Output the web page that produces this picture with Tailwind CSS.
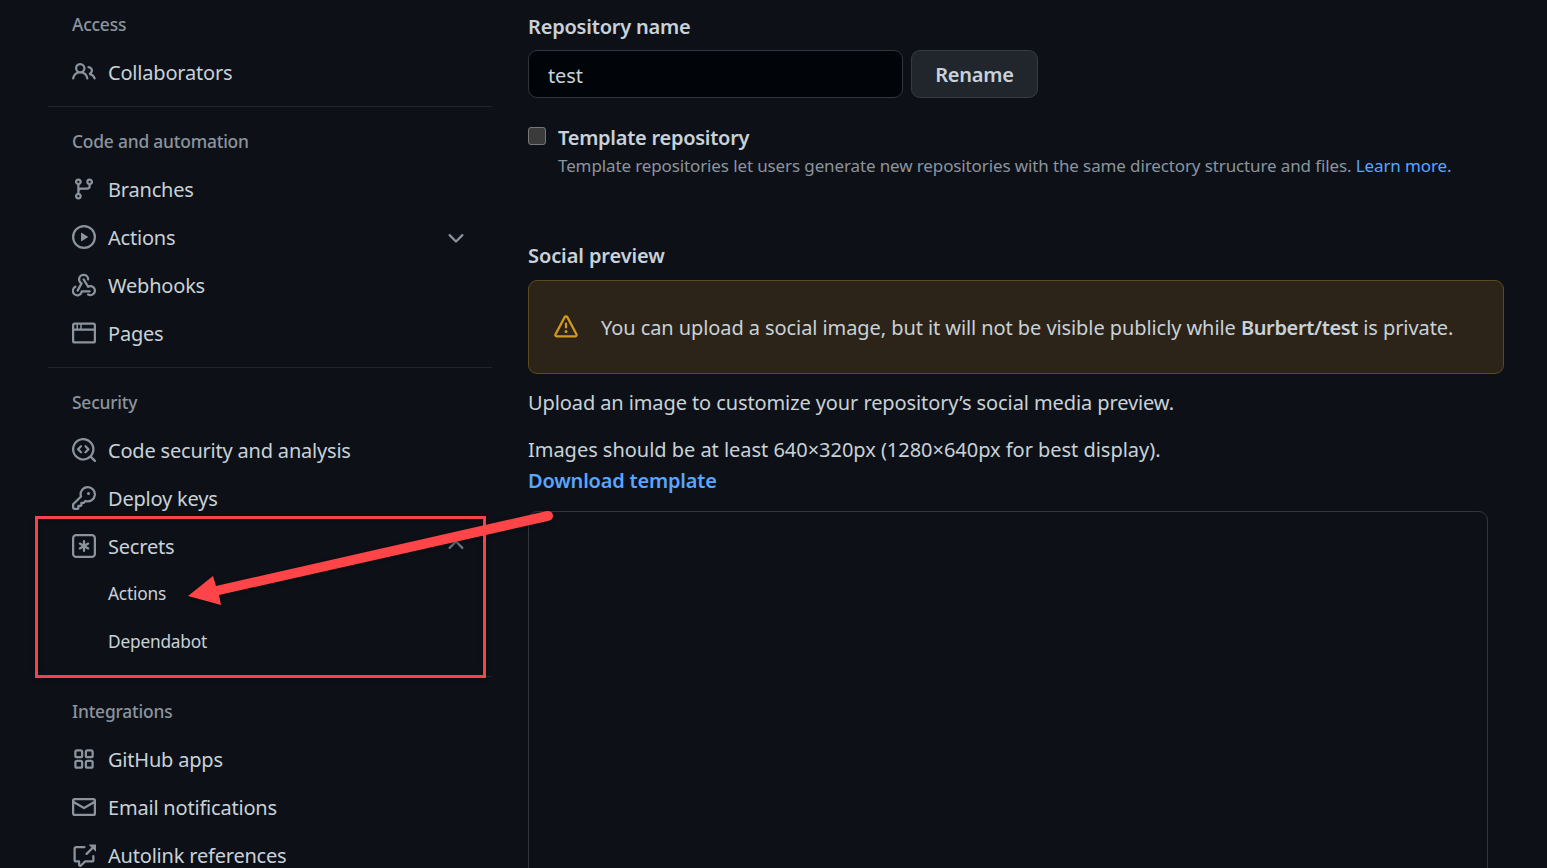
<!DOCTYPE html>
<html lang="en">
<head>
    <meta charset="UTF-8">
    <meta name="viewport" content="width=device-width, initial-scale=1.0">
    <title>Repository settings</title>
    <script src="https://cdn.jsdelivr.net/npm/@tailwindcss/browser@4"></script>
</head>
<body class="bg-[#0d1117] text-[#c9d1d9] font-['Noto_Sans',sans-serif] text-[20px] h-[868px] overflow-hidden relative">
    <div class="flex pl-[48px] gap-[36px] h-[868px] overflow-hidden">
        <!-- Sidebar -->
        <nav class="w-[444px] shrink-0 tracking-[-0.2px]">
            <div class="h-[49px] pl-6 flex items-center text-[17.4px] font-medium text-[#8b949e]">Access</div>
            <a class="h-12 -mt-px pl-6 flex items-center gap-3">
                <svg class="w-6 h-6 fill-[#8b949e]" viewBox="0 0 16 16"><path fill-rule="evenodd" d="M5.5 3.5a2 2 0 100 4 2 2 0 000-4zM2 5.5a3.5 3.5 0 115.898 2.549 5.507 5.507 0 013.034 4.084.75.75 0 11-1.482.235 3.999 3.999 0 00-7.9 0 .75.75 0 01-1.482-.236A5.507 5.507 0 013.102 8.05 3.49 3.49 0 012 5.5zM11 4a.75.75 0 100 1.5 1.5 1.5 0 01.666 2.844.75.75 0 00-.416.672v.352a.75.75 0 00.574.73c1.2.289 2.162 1.2 2.522 2.372a.75.75 0 101.434-.44 5.01 5.01 0 00-2.56-3.012A3 3 0 0011 4z"/></svg>
                <span class="mt-[2px]">Collaborators</span>
            </a>

            <div class="mt-[10px] border-t border-[#21262d] pt-[10px]">
                <div class="h-12 pl-6 flex items-center text-[17.4px] font-medium text-[#8b949e]">Code and automation</div>
                <a class="h-12 pl-6 flex items-center gap-3">
                    <svg class="w-6 h-6 fill-[#8b949e]" viewBox="0 0 16 16"><path fill-rule="evenodd" d="M11.75 2.5a.75.75 0 100 1.5.75.75 0 000-1.5zm-2.25.75a2.25 2.25 0 113 2.122V6A2.5 2.5 0 0110 8.5H6a1 1 0 00-1 1v1.128a2.251 2.251 0 11-1.5 0V5.372a2.25 2.25 0 111.5 0v1.836A2.492 2.492 0 016 7h4a1 1 0 001-1v-.628A2.25 2.25 0 019.5 3.25zM4.25 12a.75.75 0 100 1.5.75.75 0 000-1.5zM3.5 3.25a.75.75 0 111.5 0 .75.75 0 01-1.5 0z"/></svg>
                    <span class="mt-[2px]">Branches</span>
                </a>
                <a class="h-12 pl-6 pr-[24px] flex items-center gap-3">
                    <svg class="w-6 h-6 fill-[#8b949e]" viewBox="0 0 16 16"><path fill-rule="evenodd" d="M1.5 8a6.5 6.5 0 1113 0 6.5 6.5 0 01-13 0zM8 0a8 8 0 100 16A8 8 0 008 0zM6.379 5.227A.25.25 0 006 5.442v5.117a.25.25 0 00.379.214l4.264-2.559a.25.25 0 000-.428L6.379 5.227z"/></svg>
                    <span class="mt-[2px]">Actions</span>
                    <svg class="w-6 h-6 fill-[#8b949e] ml-auto" viewBox="0 0 16 16"><path d="M12.78 6.22a.75.75 0 010 1.06l-4.25 4.25a.75.75 0 01-1.06 0L3.22 7.28a.75.75 0 011.06-1.06L8 9.94l3.72-3.72a.75.75 0 011.06 0z"/></svg>
                </a>
                <a class="h-12 pl-6 flex items-center gap-3">
                    <svg class="w-6 h-6 fill-[#8b949e]" viewBox="0 0 16 16"><path d="M5.5 4.25a2.25 2.25 0 014.5 0 .75.75 0 001.5 0 3.75 3.75 0 10-6.14 2.889l-2.272 4.258a.75.75 0 001.324.706L7 7.25a.75.75 0 00-.309-1.015A2.25 2.25 0 015.5 4.25z"/><path d="M7.364 3.607a.75.75 0 011.03.257l2.608 4.349a3.75 3.75 0 11-.628 6.785.75.75 0 01.752-1.299 2.25 2.25 0 10-.033-3.88.75.75 0 01-1.03-.256L7.107 4.636a.75.75 0 01.257-1.03z"/><path d="M2.9 8.776A.75.75 0 012.625 9.8 2.25 2.25 0 105.75 12.25a.75.75 0 01.75-.75h5.26a.75.75 0 010 1.5H7.175A3.751 3.751 0 111.875 8.5a.75.75 0 011.025.276z"/></svg>
                    <span class="mt-[2px]">Webhooks</span>
                </a>
                <a class="h-12 pl-6 flex items-center gap-3">
                    <svg class="w-6 h-6 fill-[#8b949e]" viewBox="0 0 16 16"><path fill-rule="evenodd" d="M0 2.75C0 1.784.784 1 1.75 1h12.5c.966 0 1.75.784 1.75 1.75v10.5A1.75 1.75 0 0114.25 15H1.75A1.75 1.75 0 010 13.25V2.75zm1.75-.25a.25.25 0 00-.25.25v10.5c0 .138.112.25.25.25h12.5a.25.25 0 00.25-.25V2.75a.25.25 0 00-.25-.25H1.75z"/><path d="M1 5h14v1.5H1zM3 2h1v3H3zM5.5 2h1v3h-1z"/></svg>
                    <span class="mt-[2px]">Pages</span>
                </a>
            </div>

            <div class="mt-[10px] border-t border-[#21262d] pt-[10px]">
                <div class="h-12 pl-6 flex items-center text-[17.4px] font-medium text-[#8b949e]">Security</div>
                <a class="h-12 pl-6 flex items-center gap-3">
                    <svg class="w-6 h-6 fill-[#8b949e]" viewBox="0 0 16 16"><path d="M8.47 4.97a.75.75 0 000 1.06L9.94 7.5 8.47 8.97a.75.75 0 101.06 1.06l2-2a.75.75 0 000-1.06l-2-2a.75.75 0 00-1.06 0zM6.53 6.03a.75.75 0 00-1.06-1.06l-2 2a.75.75 0 000 1.06l2 2a.75.75 0 101.06-1.06L5.06 7.5l1.47-1.47z"/><path fill-rule="evenodd" d="M12.246 13.307a7.5 7.5 0 111.06-1.06l2.474 2.473a.75.75 0 11-1.06 1.06l-2.474-2.473zM1.5 7.5a6 6 0 1110.386 4.102.75.75 0 00-.284.284A6 6 0 011.5 7.5z"/></svg>
                    <span class="mt-[2px]">Code security and analysis</span>
                </a>
                <a class="h-12 pl-6 flex items-center gap-3">
                    <svg class="w-6 h-6 fill-[#8b949e]" viewBox="0 0 16 16"><path fill-rule="evenodd" d="M6.5 5.5a4 4 0 112.731 3.795.75.75 0 00-.768.18L7.44 10.5H6.25a.75.75 0 00-.75.75v1.19l-.06.06H4.25a.75.75 0 00-.75.75v1.19l-.06.06H1.75a.25.25 0 01-.25-.25v-1.69l5.024-5.024a.75.75 0 00.181-.768A3.995 3.995 0 016.5 5.5zm4-5.5a5.5 5.5 0 00-5.348 6.788L.22 11.72a.75.75 0 00-.22.53v2C0 15.216.784 16 1.75 16h2a.75.75 0 00.53-.22l.5-.5a.75.75 0 00.22-.53V14h.75a.75.75 0 00.53-.22l.5-.5a.75.75 0 00.22-.53V12h.75a.75.75 0 00.53-.22l.932-.932A5.5 5.5 0 1010.5 0zm.5 6a1 1 0 100-2 1 1 0 000 2z"/></svg>
                    <span class="mt-[2px]">Deploy keys</span>
                </a>
                <a class="h-12 pl-6 pr-[24px] flex items-center gap-3">
                    <svg class="w-6 h-6 fill-[#8b949e]" viewBox="0 0 16 16"><path fill-rule="evenodd" d="M0 2.75A2.75 2.75 0 012.75 0h10.5A2.75 2.75 0 0116 2.75v10.5A2.75 2.75 0 0113.25 16H2.75A2.75 2.75 0 010 13.25V2.75zM2.75 1.5c-.69 0-1.25.56-1.25 1.25v10.5c0 .69.56 1.25 1.25 1.25h10.5c.69 0 1.25-.56 1.25-1.25V2.75c0-.69-.56-1.25-1.25-1.25H2.75z"/><path d="M8 4a.75.75 0 01.75.75V6.7l1.69-.975a.75.75 0 01.75 1.3L9.5 8l1.69.976a.75.75 0 01-.75 1.298L8.75 9.3v1.951a.75.75 0 01-1.5 0V9.299l-1.69.976a.75.75 0 01-.75-1.3L6.5 8l-1.69-.975a.75.75 0 01.75-1.3l1.69.976V4.75A.75.75 0 018 4z"/></svg>
                    <span class="mt-[2px]">Secrets</span>
                    <svg class="w-6 h-6 fill-[#6e7681] ml-auto" viewBox="0 0 16 16"><path d="M3.22 9.78a.75.75 0 010-1.06l4.25-4.25a.75.75 0 011.06 0l4.25 4.25a.75.75 0 01-1.06 1.06L8 6.06 4.28 9.78a.75.75 0 01-1.06 0z"/></svg>
                </a>
                <a class="h-12 pl-[60px] flex items-center text-[17.3px]">Actions</a>
                <a class="h-12 pl-[60px] flex items-center text-[17.3px]">Dependabot</a>
            </div>

            <div class="mt-[10px] border-t border-[#21262d] pt-[10px]">
                <div class="h-12 pl-6 flex items-center text-[17.4px] font-medium text-[#8b949e]">Integrations</div>
                <a class="h-12 pl-6 flex items-center gap-3">
                    <svg class="w-6 h-6 fill-[#8b949e]" viewBox="0 0 16 16"><path fill-rule="evenodd" d="M1.5 3.25c0-.966.784-1.75 1.75-1.75h2.5c.966 0 1.75.784 1.75 1.75v2.5A1.75 1.75 0 015.75 7.5h-2.5A1.75 1.75 0 011.5 5.75v-2.5zM3.25 3a.25.25 0 00-.25.25v2.5c0 .138.112.25.25.25h2.5A.25.25 0 006 5.75v-2.5A.25.25 0 005.75 3h-2.5zM1.5 10.25c0-.966.784-1.75 1.75-1.75h2.5c.966 0 1.75.784 1.75 1.75v2.5a1.75 1.75 0 01-1.75 1.75h-2.5a1.75 1.75 0 01-1.75-1.75v-2.5zM3.25 10a.25.25 0 00-.25.25v2.5c0 .138.112.25.25.25h2.5a.25.25 0 00.25-.25v-2.5a.25.25 0 00-.25-.25h-2.5zM8.5 3.25c0-.966.784-1.75 1.75-1.75h2.5c.966 0 1.75.784 1.75 1.75v2.5a1.75 1.75 0 01-1.75 1.75h-2.5A1.75 1.75 0 018.5 5.75v-2.5zM10.25 3a.25.25 0 00-.25.25v2.5c0 .138.112.25.25.25h2.5a.25.25 0 00.25-.25v-2.5a.25.25 0 00-.25-.25h-2.5zM8.5 10.25c0-.966.784-1.75 1.75-1.75h2.5c.966 0 1.75.784 1.75 1.75v2.5a1.75 1.75 0 01-1.75 1.75h-2.5a1.75 1.75 0 01-1.75-1.75v-2.5zM10.25 10a.25.25 0 00-.25.25v2.5c0 .138.112.25.25.25h2.5a.25.25 0 00.25-.25v-2.5a.25.25 0 00-.25-.25h-2.5z"/></svg>
                    <span class="mt-[2px]">GitHub apps</span>
                </a>
                <a class="h-12 pl-6 flex items-center gap-3">
                    <svg class="w-6 h-6 fill-[#8b949e]" viewBox="0 0 16 16"><path fill-rule="evenodd" d="M1.75 2A1.75 1.75 0 000 3.75v8.5C0 13.216.784 14 1.75 14h12.5A1.75 1.75 0 0016 12.25v-8.5A1.75 1.75 0 0014.25 2H1.75zM14.5 4.07v-.32a.25.25 0 00-.25-.25H1.75a.25.25 0 00-.25.25v.32L8 7.88l6.5-3.81zm-13 1.74v6.441c0 .138.112.25.25.25h12.5a.25.25 0 00.25-.25V5.809L8.38 9.397a.75.75 0 01-.76 0L1.5 5.809z"/></svg>
                    <span class="mt-[2px]">Email notifications</span>
                </a>
                <a class="h-12 pl-6 flex items-center gap-3">
                    <svg class="w-6 h-6 fill-[#8b949e]" viewBox="0 0 16 16"><path d="M16 1.25v4.146a.25.25 0 01-.427.177L14.03 4.03l-3.75 3.75a.75.75 0 11-1.06-1.06l3.75-3.75-1.543-1.543A.25.25 0 0111.604 1h4.146a.25.25 0 01.25.25zM2.75 3.5a.25.25 0 00-.25.25v7.5c0 .138.112.25.25.25h2a.75.75 0 01.75.75v2.19l2.72-2.72a.75.75 0 01.53-.22h4.5a.25.25 0 00.25-.25v-2.5a.75.75 0 111.5 0v2.5A1.75 1.75 0 0113.25 13H9.06l-2.573 2.573A1.457 1.457 0 014 14.543V13H2.75A1.75 1.75 0 011 11.25v-7.5C1 2.784 1.784 2 2.75 2h5.5a.75.75 0 010 1.5h-5.5z"/></svg>
                    <span class="mt-[2px]">Autolink references</span>
                </a>
            </div>
        </nav>

        <!-- Main settings -->
        <main class="w-[976px] shrink-0 tracking-[-0.1px]">
            <label class="block h-[50px] pt-[12px] leading-[30px] font-semibold tracking-[-0.2px]">Repository name</label>
            <div class="flex gap-2">
                <input value="test" class="w-[375px] h-12 pl-[19px] pt-[2px] rounded-[9px] border border-[#30363d] bg-[#010409] text-[#c9d1d9] outline-none">
                <button class="w-[127px] h-12 pt-[2px] rounded-[9px] border border-[#363b42] bg-[#21262d] font-semibold tracking-[-0.2px]">Rename</button>
            </div>

            <div class="flex gap-3 mt-[26px]">
                <input type="checkbox" class="appearance-none w-[18px] h-[18px] mt-[3px] rounded-[3px] bg-[#3b3b3b] border border-[#767676]">
                <div>
                    <div class="font-semibold h-[28px] leading-[28px] tracking-[-0.26px]">Template repository</div>
                    <p class="text-[17px] leading-[28px] text-[#8b949e] whitespace-nowrap tracking-[-0.12px]">Template repositories let users generate new repositories with the same directory structure and files. <span class="text-[#58a6ff]">Learn more.</span></p>
                </div>
            </div>

            <h3 class="font-semibold mt-[61px] leading-[30px]">Social preview</h3>
            <div class="mt-[9px] h-[94px] rounded-[9px] border border-[#5b4a1c] bg-[#2c2418] flex items-center pl-[25px] gap-[23px]">
                <svg class="w-6 h-6 fill-[#d29922] shrink-0" viewBox="0 0 16 16"><path fill-rule="evenodd" d="M8.22 1.754a.25.25 0 00-.44 0L1.698 13.132a.25.25 0 00.22.368h12.164a.25.25 0 00.22-.368L8.22 1.754zm-1.763-.707c.659-1.234 2.427-1.234 3.086 0l6.082 11.378A1.75 1.75 0 0114.082 15H1.918a1.75 1.75 0 01-1.543-2.575L6.457 1.047zM9 11a1 1 0 11-2 0 1 1 0 012 0zm-.25-5.25a.75.75 0 00-1.5 0v2.5a.75.75 0 001.5 0v-2.5z"/></svg>
                <p class="whitespace-nowrap pt-[2px] tracking-[-0.08px]">You can upload a social image, but it will not be visible publicly while <strong class="font-semibold tracking-[-0.35px]">Burbert/test</strong> is private.</p>
            </div>

            <p class="mt-[14px] leading-[30px]">Upload an image to customize your repository’s social media preview.</p>
            <p class="mt-[16px] leading-[31px] tracking-[-0.03px]">Images should be at least 640×320px (1280×640px for best display).<br><a class="font-semibold text-[#58a6ff] tracking-[-0.2px]">Download template</a></p>

            <div class="mt-[15px] w-[960px] h-[500px] rounded-t-[9px] border border-[#30363d]"></div>
        </main>
    </div>

    <!-- Annotation drawn over the screenshot -->
    <svg class="absolute left-0 top-0 w-[1547px] h-[868px] pointer-events-none drop-shadow-[0_1px_2px_rgba(0,0,0,0.45)]" viewBox="0 0 1547 868">
        <rect x="36.5" y="517.5" width="448" height="159" fill="none" stroke="#f5434b" stroke-width="3"/>
        <path d="M188 596L213 576L216 586L547 511Q553 511 553 516Q553 520 548 521L219 595L221 605Z" fill="#ff4548"/>
    </svg>
</body>
</html>
